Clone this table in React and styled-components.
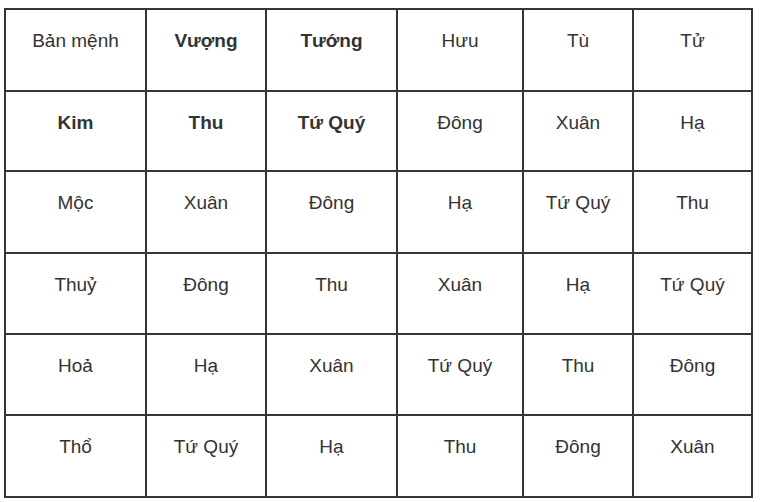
import React from 'react';
import styled, { createGlobalStyle } from 'styled-components';

const GlobalStyle = createGlobalStyle`
  html, body {
    margin: 0;
    background: #ffffff;
  }
`;

const Page = styled.div`
  padding: 8px 0 0 4px;
`;

const Grid = styled.div`
  display: inline-grid;
  grid-template-columns: 139px 118px 129px 124px 108px 117px;
  grid-template-rows: 80px 78px 80px 79px 79px 80px;
  gap: 2px;
  padding: 2px;
  background: #353535;
`;

const Cell = styled.div`
  background: #ffffff;
  padding-top: 20px;
  text-align: center;
  font-family: "Liberation Sans", Arial, sans-serif;
  font-size: 19px;
  line-height: 22px;
  color: #333333;
  font-weight: ${({ bold }) => (bold ? 700 : 400)};
`;

const rows = [
  [['Bản mệnh'], ['Vượng', 1], ['Tướng', 1], ['Hưu'], ['Tù'], ['Tử']],
  [['Kim', 1], ['Thu', 1], ['Tứ Quý', 1], ['Đông'], ['Xuân'], ['Hạ']],
  [['Mộc'], ['Xuân'], ['Đông'], ['Hạ'], ['Tứ Quý'], ['Thu']],
  [['Thuỷ'], ['Đông'], ['Thu'], ['Xuân'], ['Hạ'], ['Tứ Quý']],
  [['Hoả'], ['Hạ'], ['Xuân'], ['Tứ Quý'], ['Thu'], ['Đông']],
  [['Thổ'], ['Tứ Quý'], ['Hạ'], ['Thu'], ['Đông'], ['Xuân']],
];

export default function App() {
  return (
    <Page>
      <GlobalStyle />
      <Grid>
        {rows.map((row, r) =>
          row.map(([text, bold], c) => (
            <Cell key={`${r}-${c}`} bold={bold ? 1 : 0}>
              {text}
            </Cell>
          ))
        )}
      </Grid>
    </Page>
  );
}
